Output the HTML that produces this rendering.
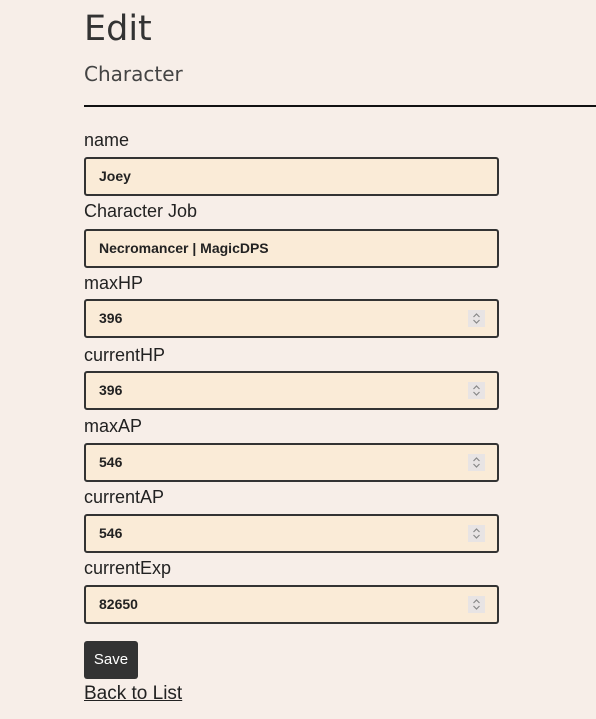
<!DOCTYPE html>
<html><head><style>
body{margin:0;background:#f7eee8;font-family:"Liberation Sans Narrow","Liberation Sans",sans-serif;color:#222;width:596px;height:719px;overflow:hidden;position:relative}
.a{position:absolute}
h1{position:absolute;left:84px;top:9px;margin:0;font:400 35px "DejaVu Sans",sans-serif;color:#333}
h2{position:absolute;left:84px;top:62px;margin:0;font:400 20px "DejaVu Sans",sans-serif;color:#444}
.hr{left:84px;top:105px;width:512px;height:2px;background:#111}
.l{left:84px;font-size:18px;color:#222}
.i{left:84px;height:35px;background:#faebd7;border:2px solid #333;border-radius:3px;font-size:14px;font-weight:bold;color:#222;line-height:35px;padding-left:13px;width:398px}
.sp{position:absolute;right:12px;top:9px;width:17px;height:17px;background:#e8e4e4}
.btn{left:84px;top:641px;width:54px;height:38px;background:#333;color:#fff;border-radius:3px;font-size:15px;line-height:38px;text-align:center}
.bl{left:84px;top:683px;font-size:19px;text-decoration:underline;color:#222}
</style></head><body>
<h1>Edit</h1><h2>Character</h2><div class="a hr"></div>
<div class="a l" style="top:130px">name</div><div class="a i" style="top:157px">Joey</div>
<div class="a l" style="top:201px">Character Job</div><div class="a i" style="top:229px">Necromancer | MagicDPS</div>
<div class="a l" style="top:273px">maxHP</div><div class="a i" style="top:299px">396<svg class="sp" viewBox="0 0 17 17"><path d="M5.5 7 8.5 4 11.5 7M5.5 10 8.5 13 11.5 10" fill="none" stroke="#888" stroke-width="1.2"/></svg></div>
<div class="a l" style="top:345px">currentHP</div><div class="a i" style="top:371px">396<svg class="sp" viewBox="0 0 17 17"><path d="M5.5 7 8.5 4 11.5 7M5.5 10 8.5 13 11.5 10" fill="none" stroke="#888" stroke-width="1.2"/></svg></div>
<div class="a l" style="top:416px">maxAP</div><div class="a i" style="top:443px">546<svg class="sp" viewBox="0 0 17 17"><path d="M5.5 7 8.5 4 11.5 7M5.5 10 8.5 13 11.5 10" fill="none" stroke="#888" stroke-width="1.2"/></svg></div>
<div class="a l" style="top:487px">currentAP</div><div class="a i" style="top:514px">546<svg class="sp" viewBox="0 0 17 17"><path d="M5.5 7 8.5 4 11.5 7M5.5 10 8.5 13 11.5 10" fill="none" stroke="#888" stroke-width="1.2"/></svg></div>
<div class="a l" style="top:558px">currentExp</div><div class="a i" style="top:585px">82650<svg class="sp" viewBox="0 0 17 17"><path d="M5.5 7 8.5 4 11.5 7M5.5 10 8.5 13 11.5 10" fill="none" stroke="#888" stroke-width="1.2"/></svg></div>
<div class="a btn">Save</div>
<div class="a bl">Back to List</div>
</body></html>
